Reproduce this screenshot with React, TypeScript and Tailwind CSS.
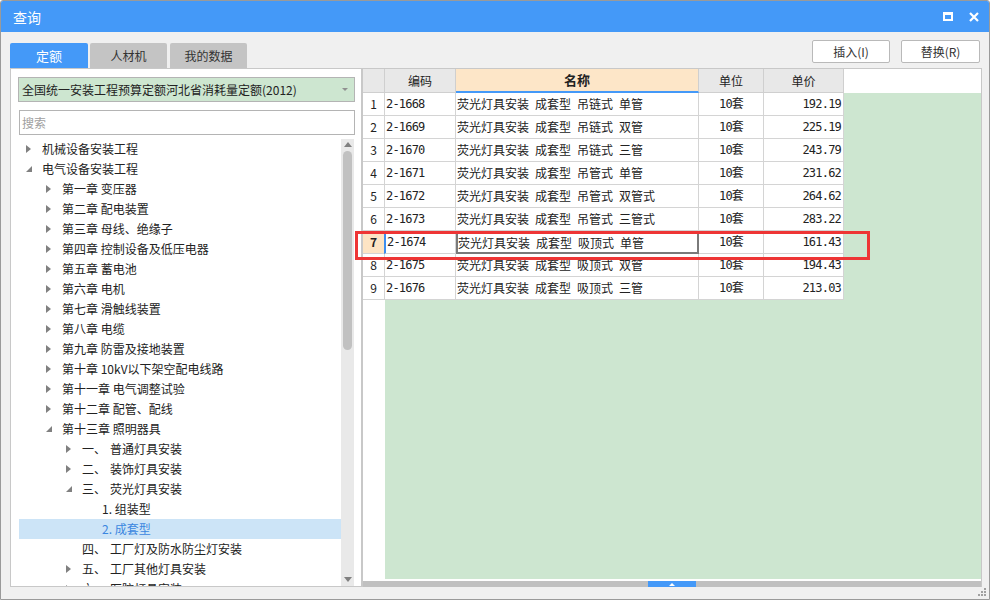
import React from "react";

type TreeNode = {
  label: string;
  num?: string;
  level: number;
  arrow?: "right" | "down";
  selected?: boolean;
};

const treeData: TreeNode[] = [
  { label: "机械设备安装工程", level: 0, arrow: "right" },
  { label: "电气设备安装工程", level: 0, arrow: "down" },
  { label: "第一章 变压器", level: 1, arrow: "right" },
  { label: "第二章 配电装置", level: 1, arrow: "right" },
  { label: "第三章 母线、绝缘子", level: 1, arrow: "right" },
  { label: "第四章 控制设备及低压电器", level: 1, arrow: "right" },
  { label: "第五章 蓄电池", level: 1, arrow: "right" },
  { label: "第六章 电机", level: 1, arrow: "right" },
  { label: "第七章 滑触线装置", level: 1, arrow: "right" },
  { label: "第八章 电缆", level: 1, arrow: "right" },
  { label: "第九章 防雷及接地装置", level: 1, arrow: "right" },
  { label: "第十章 10kV以下架空配电线路", level: 1, arrow: "right" },
  { label: "第十一章 电气调整试验", level: 1, arrow: "right" },
  { label: "第十二章 配管、配线", level: 1, arrow: "right" },
  { label: "第十三章 照明器具", level: 1, arrow: "down" },
  { num: "一、", label: "普通灯具安装", level: 2, arrow: "right" },
  { num: "二、", label: "装饰灯具安装", level: 2, arrow: "right" },
  { num: "三、", label: "荧光灯具安装", level: 2, arrow: "down" },
  { label: "1. 组装型", level: 3 },
  { label: "2. 成套型", level: 3, selected: true },
  { num: "四、", label: "工厂灯及防水防尘灯安装", level: 2 },
  { num: "五、", label: "工厂其他灯具安装", level: 2, arrow: "right" },
  { num: "六、", label: "医院灯具安装", level: 2, arrow: "right" },
];

const indent = ["pl-[7px]", "pl-[27px]", "pl-[47px]", "pl-[67px]"];

const rows = [
  { code: "2-1668", name: "荧光灯具安装 成套型 吊链式 单管", price: "192.19" },
  { code: "2-1669", name: "荧光灯具安装 成套型 吊链式 双管", price: "225.19" },
  { code: "2-1670", name: "荧光灯具安装 成套型 吊链式 三管", price: "243.79" },
  { code: "2-1671", name: "荧光灯具安装 成套型 吊管式 单管", price: "231.62" },
  { code: "2-1672", name: "荧光灯具安装 成套型 吊管式 双管式", price: "264.62" },
  { code: "2-1673", name: "荧光灯具安装 成套型 吊管式 三管式", price: "283.22" },
  { code: "2-1674", name: "荧光灯具安装 成套型 吸顶式 单管", price: "161.43" },
  { code: "2-1675", name: "荧光灯具安装 成套型 吸顶式 双管", price: "194.43" },
  { code: "2-1676", name: "荧光灯具安装 成套型 吸顶式 三管", price: "213.03" },
];

const mono =
  "font-['DejaVu_Sans_Mono','Noto_Sans_CJK_SC',monospace] text-[12px] tracking-[-0.8px]";

const Arrow = ({ dir }: { dir?: "right" | "down" }) => {
  if (dir === "right")
    return (
      <svg width="5" height="8" viewBox="0 0 5 8">
        <path d="M0 0 L5 4 L0 8Z" fill="#808080" />
      </svg>
    );
  if (dir === "down")
    return (
      <svg width="6" height="6" viewBox="0 0 6 6">
        <path d="M6 0 L6 6 L0 6Z" fill="#808080" />
      </svg>
    );
  return null;
};

export default function App() {
  return (
    <div className="relative w-[990px] h-[600px] flex flex-col bg-[#f0f0f0] border border-[#9a9a9a] rounded-t-[3px] overflow-hidden font-['Noto_Sans_CJK_SC',sans-serif] text-[#222]">
      {/* Title bar */}
      <div className="h-[31px] bg-[#4499f8] flex items-center justify-between pl-[12px] pr-[10px] shrink-0">
        <span className="text-white text-[14px] leading-none">查询</span>
        <div className="flex items-center gap-[16px]">
          <div className="w-[10px] h-[9px] border-2 border-white border-t-[3px]" />
          <svg width="10" height="10" viewBox="0 0 10 10">
            <path d="M1 1 L9 9 M9 1 L1 9" stroke="white" strokeWidth="2.2" />
          </svg>
        </div>
      </div>

      {/* Tabs and buttons */}
      <div className="h-[36px] flex justify-between shrink-0">
        <div className="flex items-end pl-[9px] gap-[2px]">
          <div className="w-[78px] h-[25px] bg-[#4499f8] text-white text-[13px] flex items-center justify-center rounded-t-[2px]">
            定额
          </div>
          <div className="w-[77px] h-[25px] bg-[#c4c4c4] text-[#333] text-[12px] flex items-center justify-center rounded-t-[2px]">
            人材机
          </div>
          <div className="ml-[1px] w-[77px] h-[25px] bg-[#c4c4c4] text-[#333] text-[12px] flex items-center justify-center rounded-t-[2px]">
            我的数据
          </div>
        </div>
        <div className="flex items-start pt-[8px] pr-[9px] gap-[11px]">
          <button className="w-[78px] h-[23px] bg-white border border-[#b9b9b9] rounded-[2px] text-[12px] text-[#333] leading-none">
            插入(I)
          </button>
          <button className="w-[79px] h-[23px] bg-white border border-[#b9b9b9] rounded-[2px] text-[12px] text-[#333] leading-none">
            替换(R)
          </button>
        </div>
      </div>

      {/* Main */}
      <div className="h-[519px] flex pl-[9px] pr-[7px] shrink-0">
        {/* Left panel */}
        <div className="w-[352px] h-full bg-white border border-[#c8c8c8] flex flex-col pt-[8px] pl-[7px] pr-[6px]">
          <div className="w-[337px] h-[25px] bg-[#cde6d0] border border-[#b4b4b4] flex items-center justify-between pl-[3px] pr-[6px] shrink-0">
            <span className="text-[12px] text-[#222] whitespace-nowrap">全国统一安装工程预算定额河北省消耗量定额(2012)</span>
            <svg width="6" height="3" viewBox="0 0 6 3">
              <path d="M0 0 L6 0 L3 3Z" fill="#909090" />
            </svg>
          </div>
          <div className="ml-[1px] mt-[8px] w-[336px] h-[25px] border border-[#b4b4b4] flex items-center pl-[2px] shrink-0">
            <span className="text-[12px] text-[#a0a0a0]">搜索</span>
          </div>
          <div className="mt-[4px] flex-1 min-h-0 flex">
            <div className="ml-[1px] w-[322px] overflow-hidden">
              {treeData.map((n, i) => (
                <div
                  key={i}
                  className={`h-[20px] flex items-center ${indent[n.level]} ${
                    n.selected ? "bg-[#cce4f7] text-[#3b87e0]" : "text-[#222]"
                  }`}
                >
                  <div className="w-[16px] flex items-center">
                    <Arrow dir={n.arrow} />
                  </div>
                  {n.num && <span className="w-[28px] text-[12px] leading-none whitespace-nowrap">{n.num}</span>}
                  <span className="text-[12px] whitespace-nowrap leading-none">{n.label}</span>
                </div>
              ))}
            </div>
            <div className="w-[13px] bg-[#e9e9e9] flex flex-col items-center pt-[3px] pb-[4px]">
              <svg width="8" height="5" viewBox="0 0 8 5">
                <path d="M0 5 L4 0 L8 5Z" fill="#808080" />
              </svg>
              <div className="mt-[4px] w-[9px] h-[199px] rounded-full bg-[#c1c1c1]" />
              <div className="flex-1" />
              <svg width="8" height="5" viewBox="0 0 8 5">
                <path d="M0 0 L8 0 L4 5Z" fill="#808080" />
              </svg>
            </div>
          </div>
        </div>

        {/* Right panel */}
        <div className="flex-1 h-full border-t border-l border-r border-[#c8c8c8] flex flex-col bg-white">
          <div className="flex-1 min-h-0 flex">
            {/* row numbers */}
            <div className="w-[22px] flex flex-col bg-white">
              <div className="h-[24px] bg-[#e8e8e8] border-r border-b border-[#cfcfcf]" />
              {rows.map((_, i) => (
                <div
                  key={i}
                  className={`h-[23px] border-r border-b border-[#d4d4d4] flex items-center justify-center text-[12px] ${
                    i === 6 ? "bg-[#fde4c4] font-bold" : ""
                  }`}
                >
                  {i + 1}
                </div>
              ))}
            </div>
            <div className="flex-1 flex flex-col">
              <div className="h-[24px] flex bg-white shrink-0">
                <div className="w-[71px] bg-[#e8e8e8] border-r border-b border-[#cfcfcf] flex items-center justify-center text-[12px]">
                  编码
                </div>
                <div className="w-[243px] bg-[#fde6c8] border-r border-[#cfcfcf] border-b-2 border-b-[#4499f8] flex items-center justify-center text-[13px] font-bold">
                  名称
                </div>
                <div className="w-[65px] bg-[#e8e8e8] border-r border-b border-[#cfcfcf] flex items-center justify-center text-[12px]">
                  单位
                </div>
                <div className="w-[80px] bg-[#e8e8e8] border-r border-b border-[#cfcfcf] flex items-center justify-center text-[12px]">
                  单价
                </div>
              </div>
              <div className="flex-1 bg-[#cde6d0]">
                {rows.map((r, i) => (
                  <div key={i} className="h-[23px] flex w-[459px] bg-white">
                    <div
                      className={`w-[71px] border-r border-b border-[#d4d4d4] flex items-center pl-[1px] ${mono} ${
                        i === 6 ? "border-l-2 border-l-[#3d8ef0] -ml-[1px] w-[72px]" : ""
                      }`}
                    >
                      {r.code}
                    </div>
                    <div
                      className={`w-[243px] flex items-center text-[12px] whitespace-pre ${
                        i === 6 ? "border-2 border-[#7a7a7a] pl-0" : "border-r border-b border-[#d4d4d4] pl-[1px]"
                      }`}
                    >
                      {r.name.split(" ").join("\u2002")}
                    </div>
                    <div className={`w-[65px] border-r border-b border-[#d4d4d4] flex items-center justify-center ${mono}`}>
                      10套
                    </div>
                    <div className={`w-[80px] border-r border-b border-[#d4d4d4] flex items-center justify-end pr-[2px] ${mono}`}>
                      {r.price}
                    </div>
                  </div>
                ))}
              </div>
            </div>
          </div>
          <div className="h-[2px] bg-white shrink-0" />
          <div className="h-[6px] bg-[#c0c0c0] flex justify-center shrink-0">
            <div className="w-[48px] h-full bg-[#4499f8] flex items-center justify-center">
              <svg width="6" height="3" viewBox="0 0 6 3">
                <path d="M0 3 L3 0 L6 3Z" fill="white" />
              </svg>
            </div>
          </div>
        </div>
      </div>

      {/* Resize grip */}
      <div className="flex-1 flex justify-end items-end pr-[3px] pb-[3px]">
        <svg width="8" height="8" viewBox="0 0 8 8">
          <rect x="6" y="0" width="2" height="2" fill="#a0a0a0" />
          <rect x="3" y="3" width="2" height="2" fill="#a0a0a0" />
          <rect x="6" y="3" width="2" height="2" fill="#a0a0a0" />
          <rect x="0" y="6" width="2" height="2" fill="#a0a0a0" />
          <rect x="3" y="6" width="2" height="2" fill="#a0a0a0" />
          <rect x="6" y="6" width="2" height="2" fill="#a0a0a0" />
        </svg>
      </div>

      {/* Red highlight box */}
      <div className="absolute left-[354px] top-[230px] w-[515px] h-[29px] border-[3px] border-[#ee3535] pointer-events-none" />
    </div>
  );
}
